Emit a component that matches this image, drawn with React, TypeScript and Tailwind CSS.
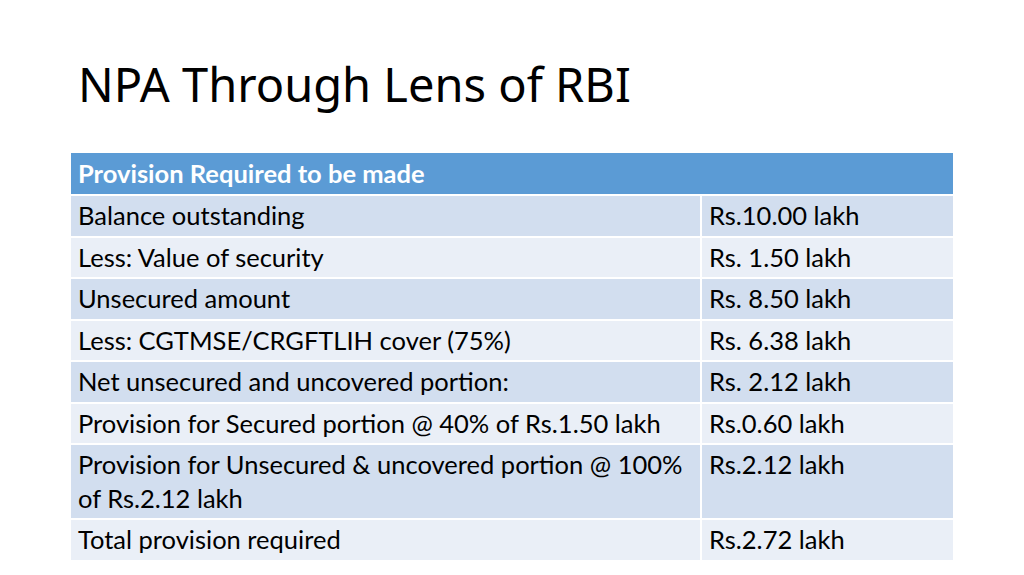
import React from 'react';

const rows: { label: string; value: string }[] = [
  { label: 'Balance outstanding', value: 'Rs.10.00 lakh' },
  { label: 'Less: Value of security', value: 'Rs. 1.50 lakh' },
  { label: 'Unsecured amount', value: 'Rs. 8.50 lakh' },
  { label: 'Less: CGTMSE/CRGFTLIH cover (75%)', value: 'Rs. 6.38 lakh' },
  { label: 'Net unsecured and uncovered portion:', value: 'Rs. 2.12 lakh' },
  { label: 'Provision for Secured portion @ 40% of Rs.1.50 lakh', value: 'Rs.0.60 lakh' },
  { label: 'Provision for Unsecured & uncovered portion @ 100% of Rs.2.12 lakh', value: 'Rs.2.12 lakh' },
  { label: 'Total provision required', value: 'Rs.2.72 lakh' },
];

const App: React.FC = () => {
  return (
    <div className="w-[1024px] h-[575px] bg-white overflow-hidden">
      <h1
        className="pl-[78px] pt-[56px] text-[47px] leading-[56px] text-black"
        style={{ fontFamily: '"Noto Sans", sans-serif' }}
      >
        NPA Through Lens of RBI
      </h1>

      <table
        className="ml-[71px] mt-[41px] w-[882px] border-collapse text-[25.5px] text-black"
        style={{ fontFamily: 'Lato, "Liberation Sans", sans-serif' }}
      >
        <thead>
          <tr className="bg-[#5b9bd5]">
            <th colSpan={2} className="h-[42px] border-b-[2px] border-white px-[7px] text-left font-bold text-white leading-[33.5px]">
              Provision Required to be made
            </th>
          </tr>
        </thead>
        <tbody>
          {rows.map((r, i) => (
            <tr key={r.label} className={i % 2 === 0 ? 'bg-[#d2deef]' : 'bg-[#eaeff7]'}>
              <td className="w-[630px] border-[2px] border-l-0 border-white px-[7px] py-[3px] align-top leading-[33.5px]">
                {r.label}
              </td>
              <td className="border-[2px] border-r-0 border-white px-[7px] py-[3px] align-top leading-[33.5px]">
                {r.value}
              </td>
            </tr>
          ))}
        </tbody>
      </table>
    </div>
  );
};

export default App;
